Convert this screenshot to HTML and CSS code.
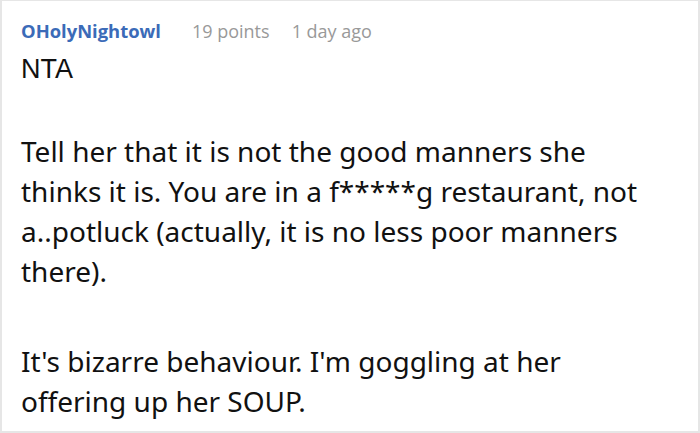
FILE: index.html
```html
<!DOCTYPE html>
<html>
<head>
<meta charset="utf-8">
<link rel="stylesheet" href="styles.css">
</head>
<body>
<div class="card">
  <div class="meta">
    <span class="user">OHolyNightowl</span>
    <span class="info">19 points</span>
    <span class="info">1 day ago</span>
  </div>
  <div class="body">
    <p class="nta">NTA</p>
    <p class="para">Tell her that it is not the good manners she thinks it is. You are in a f*****g restaurant, not a..potluck (actually, it is no less poor manners there).</p>
    <p class="para">It's bizarre behaviour. I'm goggling at her offering up her SOUP.</p>
  </div>
</div>
</body>
</html>
```
FILE: styles.css
```css
html, body {
  margin: 0;
  padding: 0;
  background: #ffffff;
}
.card {
  box-sizing: border-box;
  width: 700px;
  height: 433px;
  border: 2px solid #e6e6e6;
  border-top-width: 1px;
  padding: 18px 30px 0 19px;
  overflow: hidden;
}
.meta {
  display: flex;
  align-items: baseline;
  font-family: "Open Sans", "Noto Sans", sans-serif;
  font-size: 18px;
  line-height: 24px;
  height: 24px;
  margin-bottom: 6px;
}
.user {
  font-weight: 700;
  font-size: 18.4px;
  color: #3b6bb8;
  margin-right: 31px;
}
.info {
  color: #999999;
  margin-right: 22px;
}
.body {
  font-family: "Noto Sans", "Open Sans", sans-serif;
  font-size: 28px;
  line-height: 40px;
  color: #111111;
}
.nta {
  margin: 0 0 42px 0;
  font-family: "Liberation Sans", Arial, sans-serif;
  font-size: 27px;
}
.para {
  margin: 0 0 50px 0;
}
```
